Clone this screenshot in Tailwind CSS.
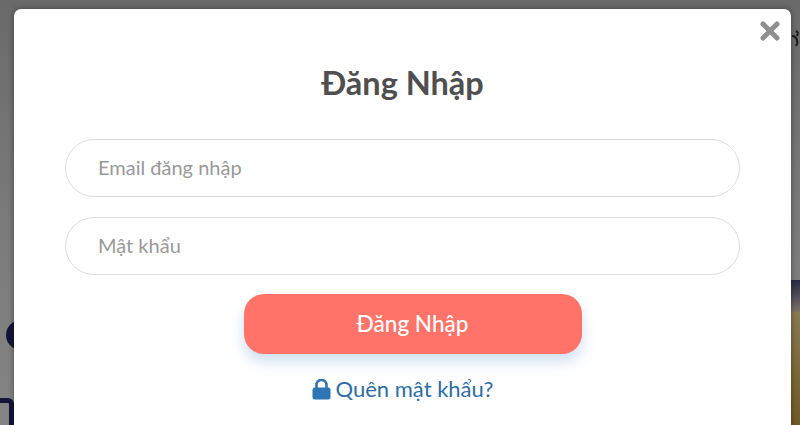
<!DOCTYPE html>
<html lang="vi">
<head>
<meta charset="utf-8">
<script src="https://cdn.jsdelivr.net/npm/@tailwindcss/browser@4"></script>
</head>
<body class="m-0 p-0">
<div class="relative w-[800px] h-[425px] overflow-hidden bg-gradient-to-b from-[#6a6a6a] via-[#7a7a7a] to-[#858585] font-['Lato',sans-serif]">
  <!-- blurred page behind the overlay -->
  <div class="absolute left-[6px] top-[320px] w-[30px] h-[30px] rounded-full bg-[#14143a] blur-[0.5px]"></div>
  <div class="absolute left-[-10px] top-[398px] w-[24px] h-[40px] rounded-[6px] border-[5px] border-[#14143a] blur-[0.5px]"></div>
  <div class="absolute left-[791px] top-[312px] w-[9px] h-[113px] bg-gradient-to-b from-[#8a7a50] to-[#6f5a28] blur-[0.5px]"></div>
  <div class="absolute left-[791px] top-[280px] w-[9px] h-[32px] bg-gradient-to-b from-[#2a2a48] to-[#7d7367] blur-[0.5px]"></div>
  <svg class="absolute left-[791px] top-[28px] blur-[0.5px]" width="9" height="20" viewBox="0 0 9 20"><path d="M1 8 A5 6 0 0 1 5 18 M5 3 Q8 4 6 8" fill="none" stroke="#1a1a1a" stroke-width="2"/></svg>

  <div class="absolute left-[14px] top-[9px] w-[777px] h-[440px] bg-white rounded-[7px] shadow-[0_0_6px_rgba(0,0,0,0.4)] flex flex-col items-center">
    <button class="absolute right-[11px] top-[10px] w-[20px] h-[24px] flex items-center justify-center" aria-label="close">
      <svg width="20" height="20" viewBox="0 0 20 20"><path d="M3 3 L17 17 M17 3 L3 17" stroke="#8f8f8f" stroke-width="5" stroke-linecap="round"/></svg>
    </button>
    <h1 class="mt-[55px] text-[32.5px] leading-[38px] font-bold text-[#4f4f4f]">Đăng Nhập</h1>
    <div class="mt-[37px] w-[675px] flex flex-col gap-[20px]">
      <input class="w-full h-[58px] rounded-full border border-[#dddddd] bg-white pl-[32px] pr-4 pb-[3px] text-[20px] placeholder:text-[#999999] outline-none" placeholder="Email đăng nhập">
      <input class="w-full h-[58px] rounded-full border border-[#dddddd] bg-white pl-[32px] pr-4 pb-[3px] text-[20px] placeholder:text-[#999999] outline-none" placeholder="Mật khẩu">
    </div>
    <button class="mt-[19px] w-[338px] h-[60px] rounded-[20px] bg-[#ff7369] text-white text-[22.5px] font-medium shadow-[0_8px_14px_rgba(70,130,200,0.25)] translate-x-[10px]">Đăng Nhập</button>
    <a class="mt-[21px] flex items-center gap-[5px] text-[#2e6da4] text-[22px] leading-[28px]">
      <svg width="19" height="21" viewBox="0 0 19 21"><path d="M4.5 9V6a5 5 0 0 1 10 0v3" fill="none" stroke="#2e75b6" stroke-width="2.6"/><rect x="0.5" y="8.5" width="18" height="12" rx="2.5" fill="#2e75b6"/></svg>
      <span>Quên mật khẩu?</span>
    </a>
  </div>
</div>
</body>
</html>
